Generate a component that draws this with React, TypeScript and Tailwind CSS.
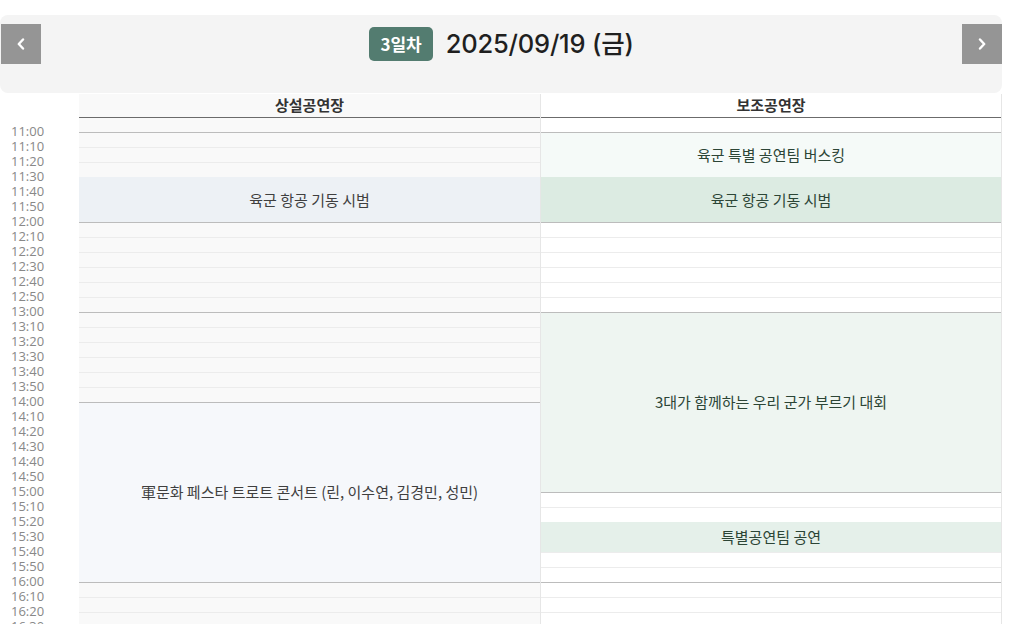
import { ReactNode } from "react";

type Stage = {
  start: string;
  end: string;
  title: string;
  tone: string;
};

// 공연장별 일정 (10분 단위)
const mainStage: Stage[] = [
  { start: "11:30", end: "12:00", title: "육군 항공 기동 시범", tone: "bg-[#edf1f5] text-[#3f3f3f]" },
  {
    start: "14:00",
    end: "16:00",
    title: "軍문화 페스타 트로트 콘서트 (린, 이수연, 김경민, 성민)",
    tone: "bg-[#f6f8fb] text-[#3f3f3f]",
  },
];

const subStage: Stage[] = [
  { start: "11:00", end: "11:30", title: "육군 특별 공연팀 버스킹", tone: "bg-[#f5faf8] text-[#2c4536]" },
  { start: "11:30", end: "12:00", title: "육군 항공 기동 시범", tone: "bg-[#dcebe2] text-[#2c4536]" },
  { start: "13:00", end: "15:00", title: "3대가 함께하는 우리 군가 부르기 대회", tone: "bg-[#eef5f1] text-[#2c4536]" },
  { start: "15:20", end: "15:40", title: "특별공연팀 공연", tone: "bg-[#e5f0ea] text-[#2c4536]" },
];

const DAY_START = 11 * 60;
const DAY_END = 18 * 60;
const STEP = 10;

const toMin = (t: string) => {
  const [h, m] = t.split(":").map(Number);
  return h * 60 + m;
};

const fmt = (m: number) => `${Math.floor(m / 60)}:${String(m % 60).padStart(2, "0")}`;

const slots: number[] = [];
for (let m = DAY_START; m < DAY_END; m += STEP) slots.push(m);

function Chevron({ dir }: { dir: "left" | "right" }) {
  return (
    <svg width="10" height="12" viewBox="0 0 10 12" fill="none">
      <path
        d={dir === "left" ? "M7 1.5 L2.8 6 L7 10.5" : "M3 1.5 L7.2 6 L3 10.5"}
        stroke="white"
        strokeWidth="2.4"
        strokeLinecap="round"
        strokeLinejoin="round"
      />
    </svg>
  );
}

function NavButton({ children }: { children: ReactNode }) {
  return (
    <button className="flex h-[40px] w-[40px] items-center justify-center bg-[#959595]">{children}</button>
  );
}

function StageColumn({
  name,
  events,
  base,
  edge,
}: {
  name: string;
  events: Stage[];
  base: string;
  edge: string;
}) {
  const cells: ReactNode[] = [];
  let m = DAY_START;
  while (m < DAY_END) {
    const ev = events.find((e) => toMin(e.start) === m);
    const isHour = m % 60 === 0;
    if (ev) {
      const span = (toMin(ev.end) - toMin(ev.start)) / STEP;
      cells.push(
        <div
          key={m}
          style={{ height: span * 15 }}
          className={`flex shrink-0 items-center justify-center border-t text-[15px] ${ev.tone} ${
            isHour ? "border-[#bcbcbc]" : "border-transparent"
          }`}
        >
          {ev.title}
        </div>
      );
      m = toMin(ev.end);
    } else {
      cells.push(
        <div
          key={m}
          className={`h-[15px] shrink-0 border-t ${base} ${isHour ? "border-[#bcbcbc]" : "border-[#ececec]"}`}
        />
      );
      m += STEP;
    }
  }

  return (
    <div className={`flex flex-col ${edge}`}>
      <div
        className={`flex h-[24px] shrink-0 items-center justify-center border-b border-[#6b6b6b] text-[15px] font-bold text-[#333] ${base}`}
      >
        {name}
      </div>
      <div className={`h-[14px] shrink-0 ${base}`} />
      {cells}
    </div>
  );
}

export default function App() {
  return (
    <main
      className="h-[624px] overflow-hidden bg-white pt-[15px]"
      style={{ fontFamily: '"Noto Sans CJK KR", "Noto Sans", sans-serif' }}
    >
      <div className="w-[1002px]">
        {/* 날짜 헤더 */}
        <header className="flex h-[78px] items-start justify-between rounded-lg bg-[#f4f4f4] pt-[9px] pl-px">
          <NavButton>
            <Chevron dir="left" />
          </NavButton>
          <div className="flex h-[40px] items-center gap-[13px]">
            <span className="flex h-[34px] items-center rounded-[5px] bg-[#537c70] px-[11px] text-[17px] font-bold text-white">
              3일차
            </span>
            <span
              className="text-[25.5px] font-medium tracking-[-0.2px] text-[#1f1f1f]"
              style={{ fontFamily: 'Inter, "Noto Sans CJK KR", sans-serif' }}
            >
              2025/09/19 (금)
            </span>
          </div>
          <NavButton>
            <Chevron dir="right" />
          </NavButton>
        </header>

        {/* 시간표 */}
        <div className="mt-px grid grid-cols-[79px_462px_461px]">
          <div className="flex flex-col pt-[30px] pl-[11px]" style={{ fontFamily: '"Open Sans", sans-serif' }}>
            {slots.map((m) => (
              <span key={m} className="h-[15px] text-[13px] leading-[15px] text-[#888]">
                {fmt(m)}
              </span>
            ))}
          </div>
          <StageColumn name="상설공연장" events={mainStage} base="bg-[#f9f9f9]" edge="border-r border-[#e6e6e6]" />
          <StageColumn name="보조공연장" events={subStage} base="bg-white" edge="border-r border-[#e6e6e6]" />
        </div>
      </div>
    </main>
  );
}
